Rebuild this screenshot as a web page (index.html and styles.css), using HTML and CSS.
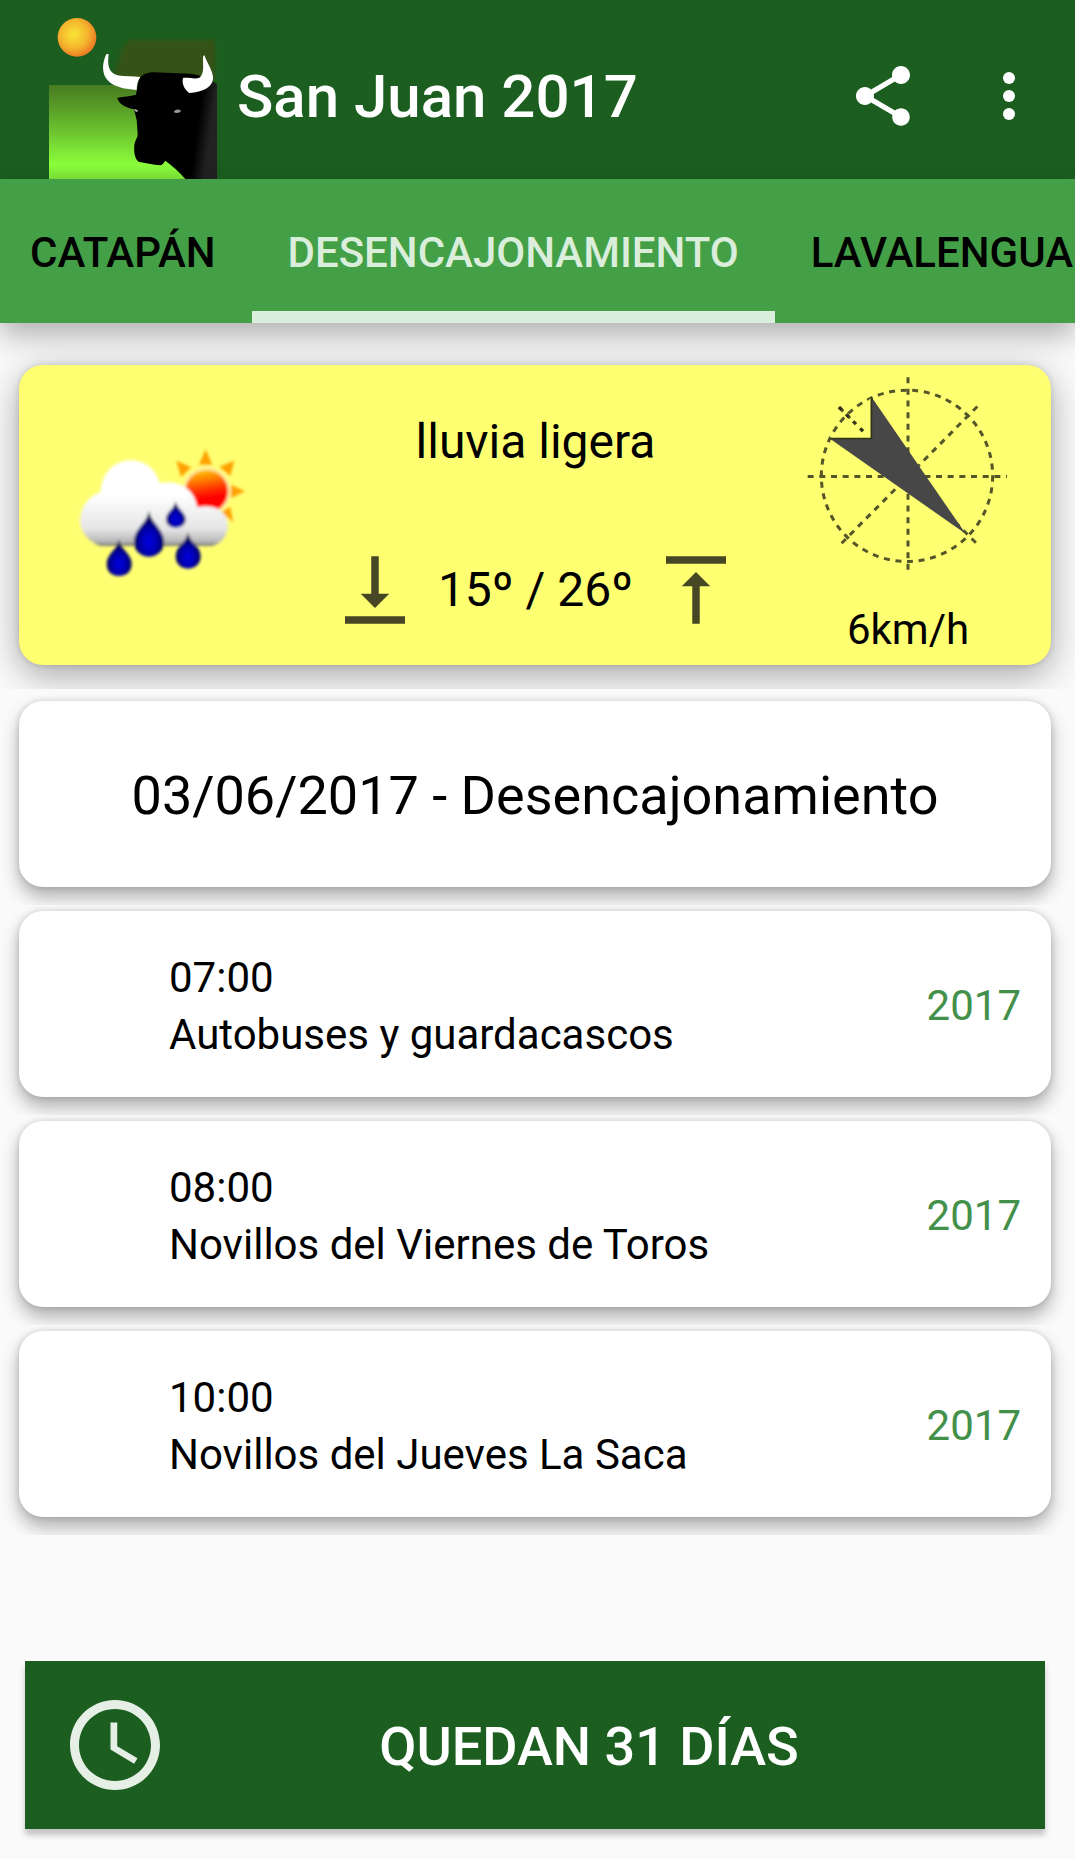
FILE: index.html
```
<!DOCTYPE html>
<html lang="es">
<head>
  <meta charset="UTF-8">
  <meta name="viewport" content="width=device-width, initial-scale=1">
  <title>San Juan 2017</title>
  <link rel="stylesheet" href="styles.css">
</head>
<body>
  <header class="barra">
    <svg class="logo" viewBox="57 36 504 501" aria-hidden="true">
      <defs>
        <radialGradient id="sol" cx="0.42" cy="0.42" r="0.6">
          <stop offset="0" stop-color="#f9e535"/>
          <stop offset="0.6" stop-color="#f4b52e"/>
          <stop offset="1" stop-color="#ec7a24"/>
        </radialGradient>
        <linearGradient id="prado" x1="0" y1="0" x2="0" y2="1">
          <stop offset="0" stop-color="#477a20"/>
          <stop offset="0.5" stop-color="#6cc42f"/>
          <stop offset="0.85" stop-color="#8cff3c"/>
          <stop offset="1" stop-color="#7fe83a"/>
        </linearGradient>
        <linearGradient id="lomo" x1="0" y1="0" x2="1" y2="0.15">
          <stop offset="0.86" stop-color="#000"/>
          <stop offset="1" stop-color="#222"/>
        </linearGradient>
        <filter id="suave"><feGaussianBlur stdDeviation="6"/></filter>
      </defs>
      <circle cx="141" cy="112" r="58" fill="url(#sol)"/>
      <path d="M300 120H556V240H250C262 190 275 130 300 120Z" fill="#345317" filter="url(#suave)"/>
      <rect x="57" y="255" width="420" height="282" fill="url(#prado)"/>
      <path d="M326 238C336 224 350 217 372 217L480 221C510 224 535 235 561 252V537H466C450 518 428 498 406 482C400 490 397 495 390 496C370 494 345 488 326 485C314 478 311 455 313 435C315 420 323 414 323 402L320 360L312 328C290 323 272 316 264 300L262 294C280 288 300 290 318 284Z" fill="url(#lomo)"/>
      <path d="M229 162L236 163C232 195 235 218 262 226C285 230 310 229 331 231C323 243 320 256 320 270C285 267 255 262 235 243C214 222 216 190 229 162Z" fill="#fff"/>
      <path d="M523 165C531 190 551 215 549 237C546 262 520 276 478 279C462 268 455 250 459 234C475 231 495 239 508 233C525 222 518 190 519 170Z" fill="#fff"/>
      <path d="M431 336C435 328 445 326 453 332C449 340 438 340 431 336Z" fill="#999"/>
      <path d="M312 327L322 330L323 336L316 334Z" fill="#ccc"/>
    </svg>
    <h1 class="titulo">San Juan 2017</h1>
    <button class="accion" type="button" aria-label="Compartir">
      <svg viewBox="0 0 24 24"><path d="M18 16.08c-.76 0-1.44.3-1.96.77L8.91 12.7c.05-.23.09-.46.09-.7s-.04-.47-.09-.7l7.05-4.11c.54.5 1.25.81 2.04.81 1.66 0 3-1.34 3-3s-1.34-3-3-3-3 1.34-3 3c0 .24.04.47.09.7L8.04 9.81C7.5 9.31 6.79 9 6 9c-1.66 0-3 1.34-3 3s1.34 3 3 3c.79 0 1.5-.31 2.04-.81l7.12 4.16c-.05.21-.08.43-.08.65 0 1.61 1.31 2.92 2.92 2.92s2.92-1.31 2.92-2.92-1.31-2.92-2.92-2.92z"/></svg>
    </button>
    <button class="accion" type="button" aria-label="Más opciones">
      <svg viewBox="0 0 24 24"><circle cx="12" cy="6" r="2"/><circle cx="12" cy="12" r="2"/><circle cx="12" cy="18" r="2"/></svg>
    </button>
  </header>

  <nav class="pestanas">
    <a class="pestana" href="#catapan">CATAPÁN</a>
    <a class="pestana activa" href="#desencajonamiento">DESENCAJONAMIENTO</a>
    <a class="pestana" href="#lavalenguas">LAVALENGUA</a>
  </nav>

  <section class="tiempo">
    <div class="tarjeta tarjeta-tiempo">
      <svg class="icono-tiempo" viewBox="0 15 660 540" aria-hidden="true">
        <defs>
          <linearGradient id="nube" gradientUnits="userSpaceOnUse" x1="0" y1="120" x2="0" y2="380">
            <stop offset="0.4" stop-color="#fff"/>
            <stop offset="0.8" stop-color="#e4e4e4"/>
            <stop offset="0.94" stop-color="#b8b8b8"/>
            <stop offset="1" stop-color="#666"/>
          </linearGradient>
          <linearGradient id="disco" x1="0.2" y1="0" x2="0.35" y2="1">
            <stop offset="0" stop-color="#ffd000"/>
            <stop offset="0.5" stop-color="#ff3000"/>
            <stop offset="0.7" stop-color="#f00"/>
          </linearGradient>
          <radialGradient id="gota" cx="0.5" cy="0.68" r="0.55">
            <stop offset="0" stop-color="#0000e0"/>
            <stop offset="0.5" stop-color="#0000b0"/>
            <stop offset="1" stop-color="#000044"/>
          </radialGradient>
          <filter id="difuso"><feGaussianBlur stdDeviation="4"/></filter>
        </defs>
        <g filter="url(#difuso)">
          <path d="M467 88L487 134H447ZM379 122L424 142L393 172ZM553 122L541 168L508 140ZM585 214L543 234V194ZM549 307L514 276L541 260Z" fill="#ffa000"/>
          <circle cx="470" cy="214" r="72" fill="#ffe9a0"/>
          <circle cx="470" cy="214" r="64" fill="url(#disco)"/>
          <path d="M150 378C112 362 88 332 90 298C92 260 116 228 152 216C154 160 192 122 240 121C286 120 318 148 330 190C375 178 430 196 442 262C490 250 530 270 534 315C534 345 515 372 484 378Z" fill="url(#nube)"/>
          <g fill="url(#gota)">
            <path d="M297 272C303 310 342 325 342 366C342 392 322 410 297 410C272 410 252 392 252 366C252 325 291 310 297 272Z"/>
            <path d="M377 243C381 268 407 276 407 298C407 314 393 324 377 324C361 324 348 314 348 298C348 276 373 268 377 243Z"/>
            <path d="M207 357C211 390 245 400 245 432C245 456 228 468 207 468C186 468 170 456 170 432C170 400 203 390 207 357Z"/>
            <path d="M414 337C418 368 452 378 452 409C452 432 435 446 414 446C393 446 377 432 377 409C377 378 410 368 414 337Z"/>
          </g>
        </g>
      </svg>

      <div class="prevision">
        <p class="estado">lluvia ligera</p>
        <div class="temperaturas">
          <svg class="flecha" viewBox="0 0 24 24" aria-hidden="true"><path d="M15.8 13H13V3h-2v10H8.200L12 16.800ZM4 19v2h16v-2Z"/></svg>
          <span>15º / 26º</span>
          <svg class="flecha" viewBox="0 0 24 24" aria-hidden="true"><path d="M8.200 11H11v10h2V11h2.800L12 7.200ZM4 3v2h16V3Z"/></svg>
        </div>
      </div>

      <div class="viento">
        <svg class="brujula" viewBox="40 40 630 620" aria-hidden="true">
          <g fill="none" stroke="#55552a" stroke-width="9" stroke-dasharray="18 17">
            <circle cx="352" cy="348" r="257"/>
            <path d="M355 52V645M54 350H652M148 142L566 556M563 140L148 558"/>
          </g>
          <path d="M120 234L246 236V112Z" fill="#ffff72"/>
          <path d="M148 142L226 220" stroke="#33331a" stroke-width="10" stroke-dasharray="12 18"/>
          <path d="M246 112L528 522L120 236H244Z" fill="#474747"/>
          <path d="M120 236H245V112" fill="none" stroke="#33331a" stroke-width="5"/>
        </svg>
        <p class="velocidad">6km/h</p>
      </div>
    </div>
  </section>

  <main class="eventos">
    <div class="fila">
      <h2 class="tarjeta tarjeta-dia">03/06/2017 - Desencajonamiento</h2>
    </div>
    <div class="fila">
      <article class="tarjeta tarjeta-evento">
        <p>07:00<br>Autobuses y guardacascos</p>
        <span class="anio">2017</span>
      </article>
    </div>
    <div class="fila">
      <article class="tarjeta tarjeta-evento">
        <p>08:00<br>Novillos del Viernes de Toros</p>
        <span class="anio">2017</span>
      </article>
    </div>
    <div class="fila">
      <article class="tarjeta tarjeta-evento">
        <p>10:00<br>Novillos del Jueves La Saca</p>
        <span class="anio">2017</span>
      </article>
    </div>
  </main>

  <button class="cuenta-atras" type="button">
    <svg class="reloj" viewBox="2 2 20 20" aria-hidden="true"><path d="M11.990 2C6.470 2 2 6.480 2 12s4.470 10 9.990 10C17.520 22 22 17.520 22 12S17.520 2 11.990 2zM12 20c-4.420 0-8-3.580-8-8s3.580-8 8-8 8 3.580 8 8-3.580 8-8 8zm.5-13H11v6l5.250 3.150.75-1.230-4.500-2.670z"/></svg>
    <span>QUEDAN 31 DÍAS</span>
  </button>
</body>
</html>
```

FILE: styles.css
```
* { box-sizing: border-box; }
body {
  margin: 0;
  min-height: 100vh;
  display: flex;
  flex-direction: column;
  overflow-x: hidden;
  background: #fafafa;
  color: #000;
  font-family: Roboto, sans-serif;
  font-size: 42px;
}
h1, h2, p { margin: 0; font-weight: 400; }
button { border: 0; padding: 0; font-family: inherit; color: #fff; cursor: pointer; }
svg { display: block; flex: none; }

/* barra superior */
.barra {
  display: flex;
  align-items: center;
  padding: 12px 30px 0 49px;
  background: #1b5e20;
  color: #fff;
}
.logo { width: 168px; height: 167px; }
.titulo { flex: 1; margin-left: 20px; padding-top: 2px; font-size: 60px; font-weight: 500; }
.accion { width: 72px; height: 72px; background: none; }
.accion + .accion { margin-left: 54px; }
.accion svg { width: 72px; height: 72px; fill: #fff; }

.pestanas {
  display: flex;
  padding-right: 6px;
  background: #43a047;
  box-shadow: 0 12px 28px rgba(0, 0, 0, 0.3);
}
.pestana {
  height: 144px;
  padding: 0 36px;
  line-height: 148px;
  font-weight: 500;
  color: #000;
  text-decoration: none;
}
.pestana:first-child { margin-left: -6px; }
.activa { color: #dbeddb; border-bottom: 12px solid #dbeddb; }

/* tarjetas */
.tarjeta { border-radius: 24px; background: #fff; box-shadow: 0 10px 18px rgba(0, 0, 0, 0.3), 0 0 6px rgba(0, 0, 0, 0.15); }
.tiempo { padding: 42px 24px 24px 19px; overflow: hidden; }
.tarjeta-tiempo {
  display: grid;
  grid-template-columns: 218px 1fr 210px;
  min-height: 300px;
  padding: 8px 38px 8px 31px;
  background: #ffff72;
  box-shadow: 0 10px 36px rgba(0, 0, 0, 0.34), 0 0 6px rgba(0, 0, 0, 0.15);
}
.icono-tiempo { width: 220px; height: 180px; align-self: center; }
.prevision {
  display: flex;
  flex-direction: column;
  align-items: center;
  gap: 76px;
  padding-top: 41px;
  font-size: 48px;
  line-height: 56px;
}
.temperaturas { display: flex; align-items: center; gap: 18px; margin-top: -1px; white-space: nowrap; }
.flecha { width: 90px; height: 90px; fill: #474726; }
.viento { display: flex; flex-direction: column; align-items: center; gap: 26px; line-height: 48px; }
.brujula { width: 210px; height: 207px; }

.eventos { padding-top: 6px; }
.fila { padding: 6px 24px 18px 19px; overflow: hidden; }
.tarjeta-dia, .tarjeta-evento { display: flex; align-items: center; min-height: 186px; padding-top: 3px; }
.tarjeta-dia { justify-content: center; font-size: 54px; }
.tarjeta-evento { justify-content: space-between; padding-left: 150px; padding-right: 30px; line-height: 57px; }
.anio { color: #43904a; }

.cuenta-atras {
  display: flex;
  align-items: center;
  height: 168px;
  margin: auto 30px 30px 25px;
  padding: 0 27px 0 45px;
  background: #1b5e20;
  box-shadow: 0 6px 6px rgba(0, 0, 0, 0.22);
  font-size: 54px;
  font-weight: 500;
}
.cuenta-atras span { flex: 1; padding-top: 3px; }
.reloj { width: 90px; height: 90px; fill: #e6efe6; }
```
